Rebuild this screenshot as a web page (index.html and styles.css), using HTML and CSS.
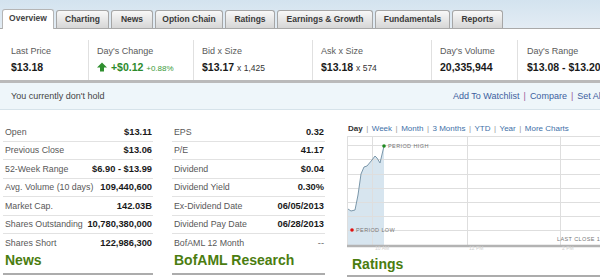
FILE: index.html
```html
<!DOCTYPE html>
<html>
<head>
<meta charset="utf-8">
<link rel="stylesheet" href="styles.css">
</head>
<body>
<div class="page">
  <div class="tabbar">
    <div class="tab active t-over">Overview</div>
    <div class="tab t-chart">Charting</div>
    <div class="tab t-news">News</div>
    <div class="tab t-opt">Option Chain</div>
    <div class="tab t-rat">Ratings</div>
    <div class="tab t-earn">Earnings &amp; Growth</div>
    <div class="tab t-fund">Fundamentals</div>
    <div class="tab t-rep">Reports</div>
  </div>

  <div class="quote">
    <div class="qcell c1">
      <div class="qlabel">Last Price</div>
      <div class="qval">$13.18</div>
    </div>
    <div class="qcell c2">
      <div class="qlabel">Day's Change</div>
      <div class="qval up">
        <svg class="arrow" width="10" height="10" viewBox="0 0 10 10"><polygon points="5,0.5 10,5.5 7,5.5 7,9.5 3,9.5 3,5.5 0,5.5" fill="#2f8f2f"/></svg>
        +$0.12 <span class="pct">+0.88%</span>
      </div>
    </div>
    <div class="qcell c3">
      <div class="qlabel">Bid x Size</div>
      <div class="qval">$13.17 <span class="size">x 1,425</span></div>
    </div>
    <div class="qcell c4">
      <div class="qlabel">Ask x Size</div>
      <div class="qval">$13.18 <span class="size">x 574</span></div>
    </div>
    <div class="qcell c5">
      <div class="qlabel">Day's Volume</div>
      <div class="qval">20,335,944</div>
    </div>
    <div class="qcell c6">
      <div class="qlabel">Day's Range</div>
      <div class="qval">$13.08 - $13.20</div>
    </div>
  </div>

  <div class="hold">
    <span>You currently don't hold</span>
    <span class="actions"><a>Add To Watchlist</a><i>|</i><a>Compare</a><i>|</i><a>Set Alerts</a></span>
  </div>

  <div class="main">
    <div class="col left">
      <div class="row"><span class="lbl">Open</span><span class="val">$13.11</span></div>
      <div class="row"><span class="lbl">Previous Close</span><span class="val">$13.06</span></div>
      <div class="row"><span class="lbl">52-Week Range</span><span class="val">$6.90 - $13.99</span></div>
      <div class="row"><span class="lbl">Avg. Volume (10 days)</span><span class="val">109,440,600</span></div>
      <div class="row"><span class="lbl">Market Cap.</span><span class="val">142.03B</span></div>
      <div class="row"><span class="lbl">Shares Outstanding</span><span class="val">10,780,380,000</span></div>
      <div class="row last"><span class="lbl">Shares Short</span><span class="val">122,986,300</span></div>
      <h2 class="head">News</h2>
    </div>
    <div class="col mid">
      <div class="row"><span class="lbl">EPS</span><span class="val">0.32</span></div>
      <div class="row"><span class="lbl">P/E</span><span class="val">41.17</span></div>
      <div class="row"><span class="lbl">Dividend</span><span class="val">$0.04</span></div>
      <div class="row"><span class="lbl">Dividend Yield</span><span class="val">0.30%</span></div>
      <div class="row"><span class="lbl">Ex-Dividend Date</span><span class="val">06/05/2013</span></div>
      <div class="row"><span class="lbl">Dividend Pay Date</span><span class="val">06/28/2013</span></div>
      <div class="row last"><span class="lbl">BofAML 12 Month</span><span class="val light">--</span></div>
      <h2 class="head">BofAML Research</h2>
    </div>
    <div class="col chart">
      <div class="ranges"><b>Day</b><i>|</i><a>Week</a><i>|</i><a>Month</a><i>|</i><a>3 Months</a><i>|</i><a>YTD</a><i>|</i><a>Year</a><i>|</i><a>More Charts</a></div>
      <svg class="plot" width="293" height="114" viewBox="0 0 293 114">
        <polygon points="1,109 1,73 4,75 8,74 11,59 14,38 17,31 20,30 25,24 28,20 30,22 33,27 37,10 37,109" fill="#d7e5ef"/>
        <g stroke="#dedede" stroke-width="1">
          <line x1="0" y1="0.5" x2="293" y2="0.5"/>
          <line x1="0" y1="9.5" x2="293" y2="9.5"/>
          <line x1="0" y1="23.5" x2="293" y2="23.5"/>
          <line x1="0" y1="38.5" x2="293" y2="38.5"/>
          <line x1="0" y1="52.5" x2="293" y2="52.5"/>
          <line x1="0" y1="66.5" x2="293" y2="66.5"/>
          <line x1="0" y1="80.5" x2="293" y2="80.5"/>
          <line x1="0" y1="94.5" x2="293" y2="94.5"/>
          <line x1="0.5" y1="0" x2="0.5" y2="109"/>
          <line x1="25.5" y1="0" x2="25.5" y2="109"/>
          <line x1="120.5" y1="0" x2="120.5" y2="109"/>
          <line x1="213.5" y1="0" x2="213.5" y2="109"/>
        </g>
        <polyline points="1,73 4,75 8,74 11,59 14,38 17,31 20,30 25,24 28,20 30,22 33,27 37,10" fill="none" stroke="#7b97aa" stroke-width="1"/>
        <line x1="0" y1="110" x2="293" y2="110" stroke="#b3b3b3" stroke-width="2.5"/>
        <circle cx="37" cy="10" r="1.8" fill="#1f8a1f"/>
        <text x="41" y="12" class="ptxt">PERIOD HIGH</text>
        <circle cx="5" cy="94" r="1.8" fill="#e01010"/>
        <text x="9" y="96" class="ptxt">PERIOD LOW</text>
        <text x="210" y="105" class="ptxt">LAST CLOSE 13.18</text>
        <text x="28" y="114" class="ttxt">10 AM</text>
        <text x="122" y="114" class="ttxt">12 PM</text>
        <text x="215" y="114" class="ttxt">2 PM</text>
      </svg>
      <h2 class="head">Ratings</h2>
    </div>
  </div>
</div>
</body>
</html>
```

FILE: styles.css
```css
html, body {
  margin: 0;
  padding: 0;
  overflow: hidden;
  background: #fff;
}

body {
  font-family: "Liberation Sans", Arial, sans-serif;
  color: #222;
}

.page {
  width: 640px;
}

/* Tabs */
.tabbar {
  height: 28px;
  display: flex;
  align-items: flex-end;
  gap: 2px;
  padding-left: 2px;
  background: linear-gradient(#d3e3ef, #e3ecf4);
  border-bottom: 1px solid #a9a9a9;
}

.tab {
  flex: none;
  box-sizing: border-box;
  height: 18px;
  line-height: 17px;
  border: 1px solid #a6a6a6;
  border-bottom: none;
  border-radius: 3px 3px 0 0;
  background: linear-gradient(#f8f8f8, #d6d6d6);
  font-size: 8.5px;
  font-weight: bold;
  color: #3a3a3a;
  text-align: center;
  white-space: nowrap;
}

.tab.active {
  height: 18px;
  margin-bottom: -1px;
  padding-bottom: 1px;
  box-sizing: content-box;
  background: #fff;
  border-color: #b5b5b5;
  color: #444;
}

.t-over  { width: 50px; }
.t-chart { width: 53px; }
.t-news  { width: 42px; }
.t-opt   { width: 68px; }
.t-rat   { width: 50px; }
.t-earn  { width: 96px; }
.t-fund  { width: 75px; }
.t-rep   { width: 51px; }

/* Quote strip */
.quote {
  display: flex;
  padding-top: 11px;
  border-bottom: 3px solid #bababa;
}

.qcell {
  flex: none;
  height: 40px;
  box-sizing: border-box;
  padding: 6px 0 0 8px;
  border-right: 1px solid #e0e0e0;
}

.c1 { width: 89px; padding-left: 11px; }
.c2 { width: 105px; }
.c3 { width: 119px; }
.c4 { width: 119px; }
.c5 { width: 86px; }
.c6 { flex: 1; border-right: none; padding-left: 9px; }

.qlabel {
  font-size: 9px;
  line-height: 11px;
  color: #5a5a5a;
}

.qval {
  margin-top: 4px;
  font-size: 10.5px;
  line-height: 13px;
  font-weight: bold;
  color: #1a1a1a;
  white-space: nowrap;
}

.qval.up {
  color: #2c8a2c;
}

.arrow {
  vertical-align: -1px;
  margin-right: 1px;
}

.pct {
  font-size: 8px;
  font-weight: normal;
  color: #3a9a3a;
}

.size {
  font-size: 8.5px;
  font-weight: normal;
  color: #333;
}

/* Holdings row */
.hold {
  height: 26px;
  display: flex;
  align-items: center;
  padding-left: 11px;
  background: #eef6fa;
  border-bottom: 1px solid #d6e3ea;
  font-size: 9px;
  color: #444;
  white-space: nowrap;
}

.actions {
  margin-left: auto;
  width: 187px;
}

.actions a {
  color: #3d5e9e;
}

.actions i {
  font-style: normal;
  color: #9a5a9a;
  margin: 0 4px;
}

/* Main area */
.main {
  display: flex;
  padding-top: 13px;
}

.col {
  flex: none;
}

.left {
  width: 150px;
  margin-left: 3px;
}

.mid {
  width: 153px;
  margin-left: 19px;
}

.chart {
  flex: 1;
  margin-left: 22px;
}

.row {
  height: 18.5px;
  box-sizing: border-box;
  display: flex;
  justify-content: space-between;
  align-items: center;
  padding: 0 1px 0 2px;
  border-bottom: 1px solid #e2e2e2;
  white-space: nowrap;
}

.row.last {
  border-bottom: none;
}

.lbl {
  font-size: 8.8px;
  color: #585858;
}

.val {
  font-size: 9.3px;
  font-weight: bold;
  color: #1a1a1a;
}

.val.light {
  font-weight: normal;
  color: #666;
}

.head {
  margin: -1px 0 0 0;
  padding: 0 0 5px 2px;
  font-size: 14px;
  line-height: 16px;
  font-weight: bold;
  color: #4b7d10;
  border-bottom: 2px solid #acacac;
}

/* Chart */
.ranges {
  height: 11px;
  line-height: 11px;
  font-size: 8px;
  padding-left: 1px;
  white-space: nowrap;
}

.ranges b {
  color: #333;
}

.ranges a {
  color: #4170a8;
}

.ranges i {
  font-style: normal;
  color: #999;
  margin: 0 3.5px;
}

.plot {
  display: block;
  margin-top: 2px;
}

.ptxt {
  font-family: "Liberation Sans", Arial, sans-serif;
  font-size: 5.5px;
  letter-spacing: 0.4px;
  fill: #777;
}

.ttxt {
  font-family: "Liberation Sans", Arial, sans-serif;
  font-size: 5px;
  fill: #d0d0d0;
}

.chart .head {
  margin-top: 6px;
  padding-left: 5px;
  padding-bottom: 3px;
}
```
